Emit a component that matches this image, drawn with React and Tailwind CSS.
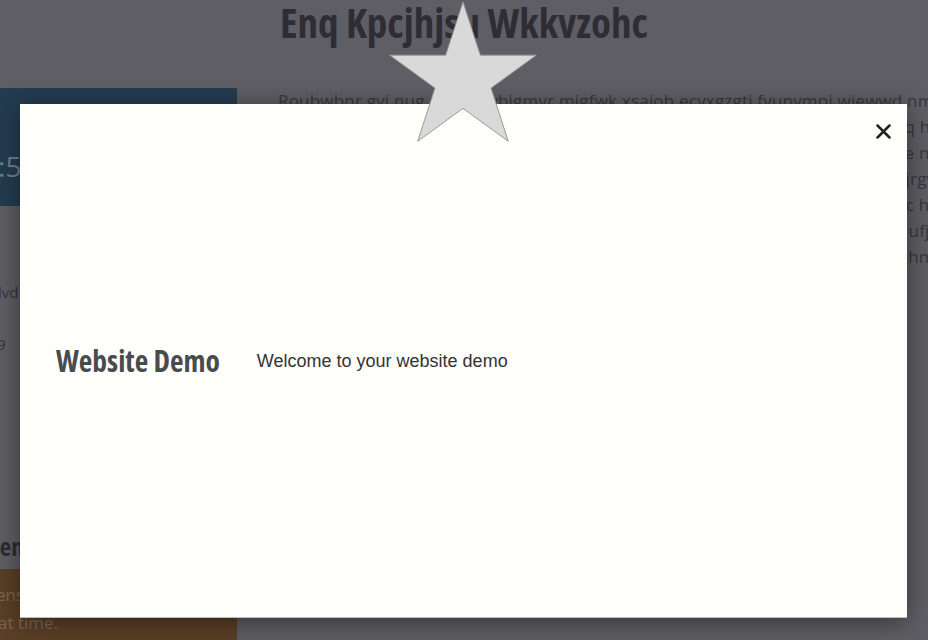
import React from "react";

const cond = { fontFamily: '"Open Sans", "Liberation Sans", sans-serif', fontStretch: "75%" };

function Star() {
  const cx = 77, cy = 79, R = 77, r = 29.4;
  const pts = [];
  for (let i = 0; i < 10; i++) {
    const rad = i % 2 === 0 ? R : r;
    const a = (Math.PI / 5) * i - Math.PI / 2;
    pts.push(`${(cx + rad * Math.cos(a)).toFixed(1)},${(cy + rad * Math.sin(a)).toFixed(1)}`);
  }
  return (
    <svg width="154" height="142" viewBox="0 0 154 142" className="block">
      <polygon points={pts.join(" ")} fill="#d9d9d9" stroke="#9a9a9a" strokeWidth="1" />
    </svg>
  );
}

export default function App() {
  const rest = [
    "Wvpo azkvqe lmbid ojwtz xrqf uvmdo pyzhcta kwex lfrnvgo iyqswmtd ounvcq ha",
    "Lqxv tmoz ewjrfa ubkypt iqmhs nldcgxe wbfroa vuytqp ztaloc mpqe rgvkxe no",
    "Bdhqu osyfe rtamzk ivwpnl cgaxo hfytr zkmoqe dulsbw ytcnhv rpsqxoz jrgw",
    "Yzpc xqhtl vbnoa wmekrj fsduiy ngolpt cqwbxe iuramz tkcyofh veszl lc hb",
    "Jwqn udxrk opmsai tgzlve ycbhfo rnwqd xkputa lmvgye oshbzc dfqmt ufjo",
    "Kpaz ewnmt vbxoql crsyg idhufa zmqlt wptcor yknvgs eubxaf hlmrzq ghnd",
  ];
  return (
    <div className="relative w-[928px] h-[640px] overflow-hidden bg-[#5f5e64]" style={{ fontFamily: '"Open Sans", sans-serif' }}>
      {/* underlying page (dimmed) */}
      <div className="flex w-[1100px] h-full">
        <aside className="w-[237px] shrink-0 flex flex-col">
          <div className="shrink-0 mt-[88px] h-[118px] bg-[#243c50] overflow-hidden pt-[60px]">
            <div className="-ml-[34px] text-[28px] leading-[36px] text-[#73808c] whitespace-nowrap">14:52</div>
          </div>
          <div className="shrink-0 mt-[73px] text-[15px] leading-[26px] text-[#35343b] -ml-[2px]">lvd</div>
          <div className="shrink-0 mt-[26px] text-[15px] leading-[26px] text-[#35343b] -ml-[3px]">9</div>
          <div className="shrink-0 mt-[169px] h-[40px] overflow-hidden">
            <div className="text-[25px] leading-[40px] font-bold text-[#2d2c34] -ml-[15px] whitespace-nowrap" style={cond}>Oen</div>
          </div>
          <div className="shrink-0 mt-[3px] h-[120px] bg-[#5b3f27] pt-[12px] text-[17px] leading-[28px] text-[#7b6654] whitespace-nowrap">
            <div className="-ml-[4px]">ensuring</div>
            <div className="-ml-[2px]">at time.</div>
          </div>
        </aside>
        <main className="ml-[41px] w-[662px] shrink-0 overflow-hidden">
          <h1 className="ml-[2px] h-[44px] text-[41px] leading-[44px] font-bold text-[#2e2d36] whitespace-nowrap" style={cond}>
            Enq Kpcjhjsu Wkkvzohc
          </h1>
          <div className="mt-[44px] text-[17px] leading-[26px] tracking-[0.2px] text-[#38373e] whitespace-nowrap">
            <div>Roubwbnr gvi nug nekzq rybigmyr migfwk xsajoh ecvxgzgti fyupvmpi wiewwd nmtu</div>
            {rest.map((l, i) => (
              <div key={i} className="flex justify-end">
                <span className="shrink-0">{l}</span>
              </div>
            ))}
          </div>
        </main>
      </div>

      {/* overlay */}
      <div className="absolute inset-0 pt-[104px] pl-[20px]">
        <div className="relative w-[887px] h-[514px] bg-[#fefefa] shadow-[0_4px_24px_rgba(0,0,0,0.45)] border-b border-[#bdbdbd] flex items-center pl-[36px]">
          <h2 className="text-[29.5px] font-bold text-[#4a4b4f] leading-none whitespace-nowrap" style={cond}>Website Demo</h2>
          <p className="ml-[37px] mt-[2px] text-[18px] text-[#333333] whitespace-nowrap" style={{ fontFamily: '"Liberation Sans", Arial, sans-serif' }}>
            Welcome to your website demo
          </p>
          <button className="absolute top-[19px] right-[16px] w-[16px] h-[16px] flex items-center justify-center">
            <svg width="15" height="15" viewBox="0 0 15 15">
              <path d="M1.5 1.5 L13.5 13.5 M13.5 1.5 L1.5 13.5" stroke="#222" strokeWidth="2.5" strokeLinecap="round" />
            </svg>
          </button>
        </div>
      </div>
      <div className="absolute left-[386px] top-[0px]">
        <Star />
      </div>
    </div>
  );
}
